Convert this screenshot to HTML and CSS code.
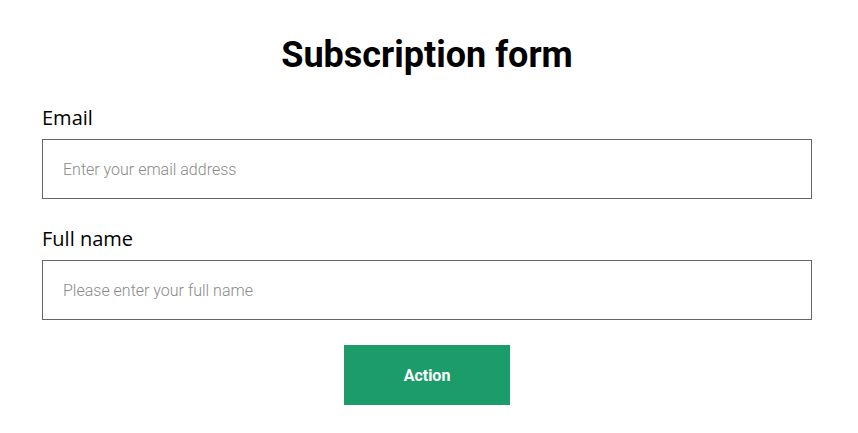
FILE: index.html
```html
<!DOCTYPE html>
<html lang="en">
<head>
    <meta charset="UTF-8">
    <meta name="viewport" content="width=device-width, initial-scale=1.0">
    <title>Subscription form</title>
    <link rel="stylesheet" href="styles.css">
</head>
<body>
    <form class="form">
        <h1 class="form-title">Subscription form</h1>

        <label class="form-label" for="email">Email</label>
        <input class="form-input" type="email" id="email" placeholder="Enter your email address">

        <label class="form-label" for="fullName">Full name</label>
        <input class="form-input" type="text" id="fullName" placeholder="Please enter your full name">

        <button class="form-button" type="button">Action</button>
    </form>
</body>
</html>
```

FILE: styles.css
```css
body {
    margin: 0;
    padding: 0;
    background-color: #fff;
    color: #000;
    font-family: 'Roboto', sans-serif;
}
.form {
    width: 770px;
    margin-left: 42px;
    padding-top: 33px;
    display: flex;
    flex-direction: column;
}
.form-title {
    margin: 0 0 28px;
    text-align: center;
    font-size: 36px;
    font-weight: 700;
    line-height: 44px;
}
.form-label {
    font-family: 'Open Sans', sans-serif;
    font-size: 20px;
    line-height: 26px;
    margin-bottom: 8px;
}
.form-input {
    box-sizing: border-box;
    height: 60px;
    padding: 0 20px;
    border: 1px solid #666;
    border-radius: 0;
    font-family: 'Roboto', sans-serif;
    font-size: 16px;
    font-weight: 300;
    color: #333;
    margin-bottom: 27px;
    outline: none;
}
.form-input::placeholder {
    color: #8a8a8a;
}
.form-button {
    align-self: center;
    width: 166px;
    height: 60px;
    margin-top: -2px;
    border: none;
    background-color: #1b9c6a;
    color: #fff;
    font-family: 'Roboto', sans-serif;
    font-size: 16px;
    font-weight: 700;
    cursor: pointer;
}
```
